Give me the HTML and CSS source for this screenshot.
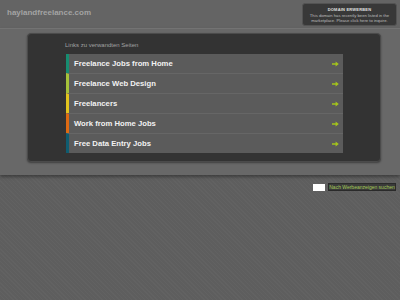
FILE: index.html
```html
<!DOCTYPE html>
<html lang="de">
<head>
<meta charset="utf-8">
<title>haylandfreelance.com</title>
<link rel="stylesheet" href="styles.css">
</head>
<body>
<header class="header">
  <div class="site-name">haylandfreelance.com</div>
  <div class="offer">
    <div class="offer-title">DOMAIN ERWERBEN</div>
    <div class="offer-text">This domain has recently been listed in the<br>marketplace. Please click here to inquire.</div>
  </div>
</header>
<main class="band">
  <section class="panel">
    <div class="caption">Links zu verwandten Seiten</div>
    <ul class="links">
      <li class="link c1"><span>Freelance Jobs from Home</span><svg class="arrow" viewBox="0 0 7 6"><path d="M0 2.3h3.6V0.6L6.8 3 3.6 5.4V3.7H0z"/></svg></li>
      <li class="link c2"><span>Freelance Web Design</span><svg class="arrow" viewBox="0 0 7 6"><path d="M0 2.3h3.6V0.6L6.8 3 3.6 5.4V3.7H0z"/></svg></li>
      <li class="link c3"><span>Freelancers</span><svg class="arrow" viewBox="0 0 7 6"><path d="M0 2.3h3.6V0.6L6.8 3 3.6 5.4V3.7H0z"/></svg></li>
      <li class="link c4"><span>Work from Home Jobs</span><svg class="arrow" viewBox="0 0 7 6"><path d="M0 2.3h3.6V0.6L6.8 3 3.6 5.4V3.7H0z"/></svg></li>
      <li class="link c5"><span>Free Data Entry Jobs</span><svg class="arrow" viewBox="0 0 7 6"><path d="M0 2.3h3.6V0.6L6.8 3 3.6 5.4V3.7H0z"/></svg></li>
    </ul>
  </section>
</main>
<div class="search">
  <input class="search-input" type="text">
  <button class="search-btn">Nach Werbeanzeigen suchen</button>
</div>
</body>
</html>
```
FILE: styles.css
```css
html, body {
  margin: 0;
  padding: 0;
}
body {
  background-color: #5e5e5e;
  background-image: repeating-linear-gradient(45deg, rgba(255,255,255,0.025) 0 1px, transparent 1px 3px);
  font-family: "Liberation Sans", Arial, sans-serif;
  width: 400px;
  height: 300px;
  overflow: hidden;
}
.header {
  height: 28px;
  box-sizing: border-box;
  display: flex;
  justify-content: space-between;
  align-items: flex-start;
  padding: 0 3px 0 7px;
  background-color: #646464;
}
.site-name {
  padding-top: 8px;
  font-size: 8px;
  line-height: 10px;
  font-weight: bold;
  color: #a3a3a3;
}
.offer {
  margin-top: 3px;
  width: 95px;
  height: 23px;
  box-sizing: border-box;
  background: #383838;
  border: 1px solid #535353;
  border-radius: 3px;
  text-align: center;
  color: #c8c8c8;
  padding-top: 3px;
}
.offer-title {
  font-size: 4px;
  line-height: 5px;
  font-weight: bold;
  color: #e0e0e0;
  letter-spacing: 0.2px;
}
.offer-text {
  margin-top: 1px;
  font-size: 4.2px;
  line-height: 5.2px;
  color: #bdbdbd;
  white-space: nowrap;
}
.band {
  display: block;
  border-top: 1px solid #737373;
  background-color: #686868;
  padding: 4px 0 13px 27px;
  box-shadow: 0 2px 3px rgba(0,0,0,0.35);
  position: relative;
}
.panel {
  width: 354px;
  box-sizing: border-box;
  background: #333333;
  border: 1px solid #4b4b4b;
  border-radius: 4px;
  padding: 7px 0 8px 37px;
  box-shadow: 0 1px 2px rgba(0,0,0,0.4);
}
.caption {
  font-size: 6px;
  line-height: 8px;
  color: #a2a2a2;
  margin-bottom: 5px;
}
.links {
  list-style: none;
  margin: 0 0 0 1px;
  padding: 0;
  width: 277px;
}
.link {
  height: 19px;
  display: flex;
  align-items: center;
  justify-content: space-between;
  background: #5b5b5b;
  border-left: 3px solid #1a8c70;
  padding: 0 4px 0 5px;
  font-size: 7.7px;
  font-weight: bold;
  color: #f2f2f2;
}
.link + .link {
  border-top: 1px solid #666666;
}
.c1 { border-left-color: #178c70; }
.c2 { border-left-color: #a6c23a; }
.c3 { border-left-color: #e2c41e; }
.c4 { border-left-color: #de6a12; }
.c5 { border-left-color: #0f5c70; }
.arrow {
  width: 7px;
  height: 6px;
  fill: #a4c41c;
}
.search {
  display: flex;
  justify-content: flex-end;
  align-items: center;
  gap: 3px;
  padding: 8px 4px 0 0;
}
.search-input {
  width: 12px;
  height: 7px;
  box-sizing: border-box;
  border: none;
  padding: 0;
  margin: 0;
  background: #ffffff;
}
.search-btn {
  width: 68px;
  height: 8px;
  box-sizing: border-box;
  margin: 0;
  padding: 0;
  border: 1px solid #2a2a2a;
  background: #3a3a3a;
  color: #a6cc5a;
  font-family: "Liberation Sans", Arial, sans-serif;
  font-size: 5px;
  line-height: 6px;
  text-align: center;
  white-space: nowrap;
  overflow: visible;
}
```
